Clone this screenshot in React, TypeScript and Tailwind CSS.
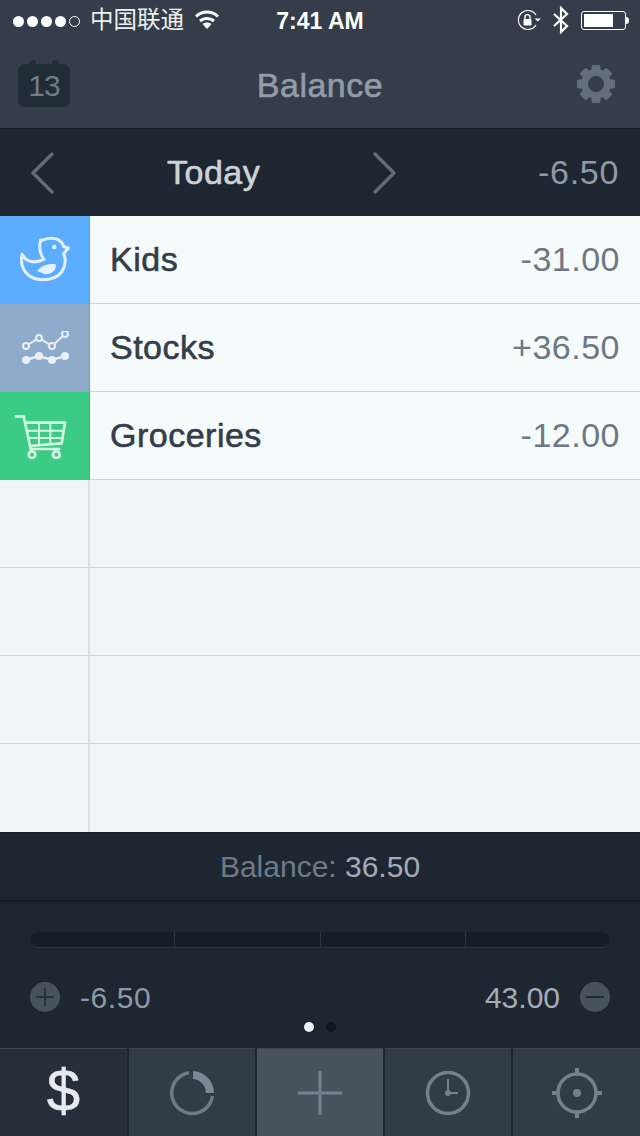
const ROWS = [
  { name: "Kids", amount: "-31.00", color: "bg-[#5cadff]", icon: <DuckIcon /> },
  { name: "Stocks", amount: "+36.50", color: "bg-[#8fabcb]", icon: <StocksIcon /> },
  { name: "Groceries", amount: "-12.00", color: "bg-[#3ccb85]", icon: <CartIcon /> },
];

// Liberation has no medium weight, a thin stroke gets close to it
const MEDIUM = "text-[34px] tracking-[0.5px] [-webkit-text-stroke:0.6px_currentColor]";

export default function App() {
  return (
    <main className="flex h-[1136px] w-[640px] flex-col overflow-hidden bg-[#1e2731] font-['Liberation_Sans','Noto_Sans_CJK_SC',sans-serif]">
      <header className="h-[129px] shrink-0 border-b border-[#191f27] bg-[#343d49]">
        <StatusBar />
        <div className="relative flex h-[88px] items-center justify-between pl-[18px] pr-[24px] pt-[2px]">
          <CalendarIcon />
          <h1 className={`absolute inset-x-0 text-center text-[#929ca9] ${MEDIUM}`}>Balance</h1>
          <GearIcon />
        </div>
      </header>

      <div className="flex h-[87px] shrink-0 items-center pl-[31px] pr-[21px]">
        <Chevron />
        <span className={`ml-[112px] w-[94px] whitespace-nowrap text-[#ced2d7] ${MEDIUM}`}>Today</span>
        <div className="ml-[111px] rotate-180">
          <Chevron />
        </div>
        <span className="ml-auto text-[34px] tracking-[0.7px] text-[#8f9aa6]">-6.50</span>
      </div>

      <ul className="flex h-[616px] shrink-0 flex-col">
        {ROWS.map((row) => (
          <li key={row.name} className="flex h-[88px] bg-[#f5fbfb]">
            <div className={`flex w-[90px] shrink-0 items-center justify-center border-r border-black/10 ${row.color}`}>
              {row.icon}
            </div>
            <div className="flex flex-1 items-center justify-between border-b border-[#cfd4d4] px-[20px]">
              <span className={`text-[#343d49] ${MEDIUM}`}>{row.name}</span>
              <span className="text-[34px] tracking-[0.5px] text-[#6e7883]">{row.amount}</span>
            </div>
          </li>
        ))}
        {[0, 1, 2, 3].map((i) => (
          <li key={i} className="flex h-[88px] border-b border-[#cfd4d4] bg-[#f0f6f6] last:border-b-0">
            <div className="w-[90px] shrink-0 border-r-2 border-[#dbe0e0]" />
          </li>
        ))}
      </ul>

      <div className="flex h-[68px] shrink-0 items-center justify-center border-t border-[#19202a] text-[30px]">
        <span className="text-[#6e7a87]">Balance:&nbsp;</span>
        <span className="text-[#a3acb6]">36.50</span>
      </div>

      <section className="h-[148px] shrink-0 border-t-2 border-[#141a22] px-[30px] pt-[30px]">
        <div className="grid h-[16px] grid-cols-4 gap-px overflow-hidden rounded-full border-b border-[#2b3542] bg-[#2b3542]">
          <div className="bg-[#151d27]" />
          <div className="bg-[#151d27]" />
          <div className="bg-[#151d27]" />
          <div className="bg-[#151d27]" />
        </div>
        <div className="mt-[34px] flex h-[30px] items-center justify-between">
          <div className="flex items-center gap-[20px]">
            <RoundButton plus />
            <span className="text-[30px] tracking-[0.6px] text-[#8f9aa6]">-6.50</span>
          </div>
          <div className="flex items-center gap-[20px]">
            <span className="text-[30px] text-[#a3acb6]">43.00</span>
            <RoundButton />
          </div>
        </div>
        <div className="mt-[10px] flex justify-center gap-[12px]">
          <span className="size-[10px] rounded-full bg-[#eef1f3]" />
          <span className="size-[10px] rounded-full bg-[#10161d]" />
        </div>
      </section>

      <nav className="grid h-[88px] shrink-0 grid-cols-[127px_126px_126px_126px_127px] gap-[2px] bg-[#1c2530]">
        <Tab className="bg-[#262f3a]">
          <span className="-mt-[4px] text-[60px] leading-none text-[#e6ebef] [-webkit-text-stroke:0.5px_currentColor]">$</span>
        </Tab>
        <Tab className="bg-[#323c47]">
          <DonutIcon />
        </Tab>
        <Tab className="bg-[#47525d]">
          <PlusIcon />
        </Tab>
        <Tab className="bg-[#323c47]">
          <ClockIcon />
        </Tab>
        <Tab className="bg-[#323c47]">
          <TargetIcon />
        </Tab>
      </nav>
    </main>
  );
}

function Tab({ className, children }: { className: string; children: React.ReactNode }) {
  return (
    <div className={`flex items-center justify-center border-t border-[#3e4854] ${className}`}>{children}</div>
  );
}

function StatusBar() {
  return (
    <div className="relative flex h-[40px] items-center pl-[13px] pr-[11px] pt-[2px] text-white">
      <div className="flex items-center gap-[3px]">
        {[0, 1, 2, 3].map((i) => (
          <span key={i} className="size-[11px] rounded-full bg-white" />
        ))}
        <span className="size-[11px] rounded-full border border-white" />
      </div>
      <span className="ml-[10px] text-[23.5px] text-[#eef0f2]">中国联通</span>
      <svg width="24" height="19" viewBox="0 0 24 19" className="ml-[11px] -mt-[3px]" fill="none" stroke="white" strokeWidth="3">
        <path d="M1 6.500 C7 0.500 17 0.500 23 6.500" />
        <path d="M5 11 C9 7.500 15 7.500 19 11" />
        <path d="M12 19 L7.500 14 C10 12 14 12 16.500 14 Z" fill="white" stroke="none" />
      </svg>
      <span className="absolute inset-x-0 text-center text-[23px] font-bold">7:41 AM</span>
      <div className="ml-auto flex items-center -mt-[2px]">
        <svg width="24" height="22" viewBox="0 0 24 22" fill="none">
          <path d="M19 6 A9.500 9.500 0 1 0 19 16" stroke="white" strokeWidth="1.200" />
          <path d="M17.500 9.500 H24 L20.800 12.500 Z" fill="white" />
          <rect x="6.500" y="10" width="8" height="6.500" rx="0.800" fill="white" />
          <path d="M8 10 V8 a2.500 2.500 0 0 1 5 0 V10" stroke="white" strokeWidth="1.400" />
        </svg>
        <svg width="18" height="28" viewBox="0 0 18 28" className="ml-[11px]" fill="none" stroke="white" strokeWidth="2.200">
          <path d="M2 8 L15 20 L9 26 V2 L15 8 L2 20" />
        </svg>
        <div className="ml-[11px] h-[19px] w-[45px] rounded-[3px] border border-white p-[2px]">
          <div className="h-full w-[29px] bg-white" />
        </div>
        <div className="h-[7px] w-[3px] rounded-r-full bg-white" />
      </div>
    </div>
  );
}

function CalendarIcon() {
  return (
    <div className="relative flex h-[43px] w-[52px] items-center justify-center rounded-[7px] bg-[#222c37]">
      <span className="absolute left-[11px] top-[-4px] h-[8px] w-[7px] rounded-full bg-[#222c37]" />
      <span className="absolute right-[11px] top-[-4px] h-[8px] w-[7px] rounded-full bg-[#222c37]" />
      <span className="text-[30px] tracking-[-1px] text-[#6f7b88]">13</span>
    </div>
  );
}

function GearIcon() {
  const teeth = [0, 45, 90, 135, 180, 225, 270, 315];
  return (
    <svg width="40" height="40" viewBox="0 0 40 40" className="-mt-[2px]">
      {teeth.map((a) => (
        <rect key={a} x="15.500" y="1" width="9" height="9" rx="1.500" fill="#646f7b" transform={`rotate(${a} 20 20)`} />
      ))}
      <circle cx="20" cy="20" r="11.500" fill="none" stroke="#646f7b" strokeWidth="7" />
    </svg>
  );
}

function Chevron() {
  return (
    <svg width="24" height="42" viewBox="0 0 24 42" fill="none" stroke="#626d79" strokeWidth="3.200" strokeLinecap="round" strokeLinejoin="round">
      <path d="M21 2 L2 21 L21 40" />
    </svg>
  );
}

// duck and cart use coordinates read off a 3x crop, hence the large viewBox
function DuckIcon() {
  return (
    <svg width="50" height="46" viewBox="60 60 150 138" className="-mt-[2px]" fill="none" stroke="#e4f1ff" strokeWidth="9" strokeLinejoin="round">
      <path d="M66 115 C80 140 105 142 132 130 C118 112 116 95 122 72 C132 74 134 70 142 68 C168 62 186 74 191 92 L205 96 L191 113 C198 130 196 150 186 166 C174 186 150 191 125 191 C85 190 58 160 66 115 Z" />
      <path d="M112 165 C122 150 145 140 167 145 C170 160 160 173 140 175 C130 175 122 168 112 165 Z" fill="#e4f1ff" stroke="none" />
      <circle cx="163" cy="93" r="7" fill="#e4f1ff" stroke="none" />
    </svg>
  );
}

function StocksIcon() {
  return (
    <svg width="50" height="34" viewBox="0 0 50 34" fill="none" stroke="#e8eff7" strokeWidth="2">
      <path d="M6 15 L19 7 L32 15 L45 3" />
      <path d="M6 29 L19 25 L32 29 L45 25" strokeWidth="2.500" />
      <circle cx="6" cy="15" r="3" fill="#8fabcb" />
      <circle cx="19" cy="7" r="3" fill="#8fabcb" />
      <circle cx="32" cy="15" r="3" fill="#8fabcb" />
      <circle cx="45" cy="3" r="3" fill="#8fabcb" />
      <circle cx="6" cy="29" r="4" fill="#e8eff7" stroke="none" />
      <circle cx="19" cy="25" r="4" fill="#e8eff7" stroke="none" />
      <circle cx="32" cy="29" r="4" fill="#e8eff7" stroke="none" />
      <circle cx="45" cy="25" r="4" fill="#e8eff7" stroke="none" />
    </svg>
  );
}

function CartIcon() {
  return (
    <svg width="55" height="45" viewBox="40 590 165 135" className="-translate-x-[4px]" fill="none" stroke="#d4f7e4" strokeWidth="8" strokeLinejoin="round">
      <path d="M45 597 H72 L93 695 H182" />
      <path d="M75 616 H196 L186 678 L89 686" />
      <path d="M80 640 H192 M84 662 H188 M118 616 V682 M152 616 V680" strokeWidth="6" />
      <circle cx="97" cy="712" r="10" />
      <circle cx="170" cy="712" r="10" />
    </svg>
  );
}

function RoundButton({ plus }: { plus?: boolean }) {
  return (
    <svg width="30" height="30" viewBox="0 0 30 30">
      <circle cx="15" cy="15" r="15" fill="#47525d" />
      {plus ? (
        <path d="M6 15 H24 M15 6 V24" stroke="#1f2833" strokeWidth="1.500" />
      ) : (
        <path d="M6 15 H24" stroke="#1f2833" strokeWidth="2" />
      )}
    </svg>
  );
}

function DonutIcon() {
  return (
    <svg width="46" height="46" viewBox="0 0 46 46" fill="none">
      <path d="M43.500 26 A20.500 20.500 0 1 1 20 2.700" stroke="#6f7a85" strokeWidth="3.500" />
      <path d="M24 1 A22 22 0 0 1 45 23 L37 23 A14 14 0 0 0 24 9 Z" fill="#7d8894" />
    </svg>
  );
}

function PlusIcon() {
  return (
    <svg width="44" height="44" viewBox="0 0 44 44" stroke="#74808b" strokeWidth="3">
      <path d="M0 22 H44 M22 0 V44" />
    </svg>
  );
}

function ClockIcon() {
  return (
    <svg width="46" height="46" viewBox="0 0 46 46" fill="none" stroke="#74808b" strokeWidth="3.500">
      <circle cx="23" cy="23" r="20.500" />
      <path d="M23 9 V23 H33" strokeWidth="2" />
      <circle cx="23" cy="23" r="3" fill="#74808b" stroke="none" />
    </svg>
  );
}

function TargetIcon() {
  return (
    <svg width="50" height="50" viewBox="0 0 50 50" fill="none" stroke="#74808b" strokeWidth="3.500">
      <circle cx="25" cy="25" r="19" />
      <path d="M25 0 V6 M25 44 V50 M0 25 H6 M44 25 H50" strokeWidth="4" />
      <circle cx="25" cy="25" r="4" fill="#74808b" stroke="none" />
    </svg>
  );
}
